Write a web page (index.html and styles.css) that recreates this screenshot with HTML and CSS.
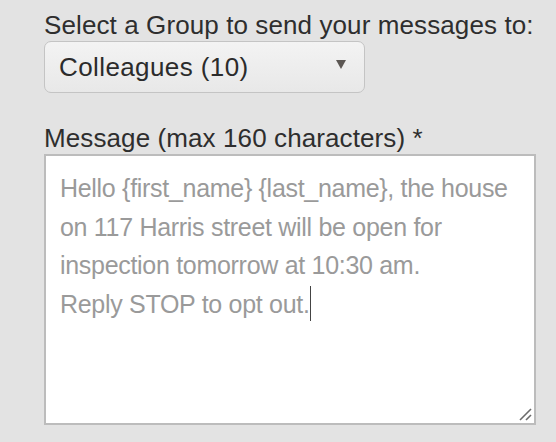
FILE: index.html
```html
<!DOCTYPE html>
<html>
<head>
<meta charset="utf-8">
<link rel="stylesheet" href="styles.css">
</head>
<body>
<div class="form">
  <div class="field">
    <label class="label">Select a Group to send your messages to:</label>
    <div class="select">
      <span class="select-value">Colleagues (10)</span>
      <span class="arrow"></span>
    </div>
  </div>
  <div class="field field-message">
    <label class="label">Message (max 160 characters) *</label>
    <div class="textarea">
      <p class="message">Hello {first_name} {last_name}, the house on 117 Harris street will be open for inspection tomorrow at 10:30 am.<br>Reply STOP to opt out.<span class="caret"></span></p>
      <svg class="grip" width="14" height="14" viewBox="0 0 14 14">
        <line x1="2" y1="13" x2="13" y2="2" stroke="#6b6b6b" stroke-width="1.6"/>
        <line x1="8" y1="13" x2="13" y2="8" stroke="#6b6b6b" stroke-width="1.6"/>
      </svg>
    </div>
  </div>
</div>
</body>
</html>
```
FILE: styles.css
```css
html, body {
  margin: 0;
  padding: 0;
  background: #e3e3e3;
}
.form {
  padding: 11px 0 0 44px;
  font-family: "Liberation Sans", Arial, sans-serif;
  color: #2e2e2e;
}
.field {
  display: flex;
  flex-direction: column;
  align-items: flex-start;
  gap: 2px;
}
.field-message {
  margin-top: 31px;
}
.label {
  font-size: 26px;
  line-height: 28px;
  letter-spacing: 0.1px;
}
.select {
  box-sizing: border-box;
  width: 321px;
  height: 52px;
  border: 1px solid #c4c4c4;
  border-radius: 7px;
  background: linear-gradient(#f3f3f3, #e8e8e8);
  display: flex;
  align-items: center;
  justify-content: space-between;
  padding: 0 18px 0 14px;
}
.select-value {
  font-size: 26px;
  letter-spacing: 0.4px;
  color: #2b2b2b;
}
.arrow {
  width: 0;
  height: 0;
  border-left: 5.5px solid transparent;
  border-right: 5.5px solid transparent;
  border-top: 9px solid #5c5753;
  margin-top: -5px;
}
.textarea {
  position: relative;
  box-sizing: border-box;
  width: 492px;
  height: 271px;
  background: #ffffff;
  border: 2px solid #bcbcbc;
  padding: 13px 14px;
}
.message {
  margin: 0;
  font-size: 25px;
  line-height: 38.5px;
  letter-spacing: -0.3px;
  color: #9a9a9a;
}
.caret {
  display: inline-block;
  width: 1px;
  height: 35px;
  background: #444;
  vertical-align: -8px;
}
.grip {
  position: absolute;
  right: 2px;
  bottom: 2px;
}
```
